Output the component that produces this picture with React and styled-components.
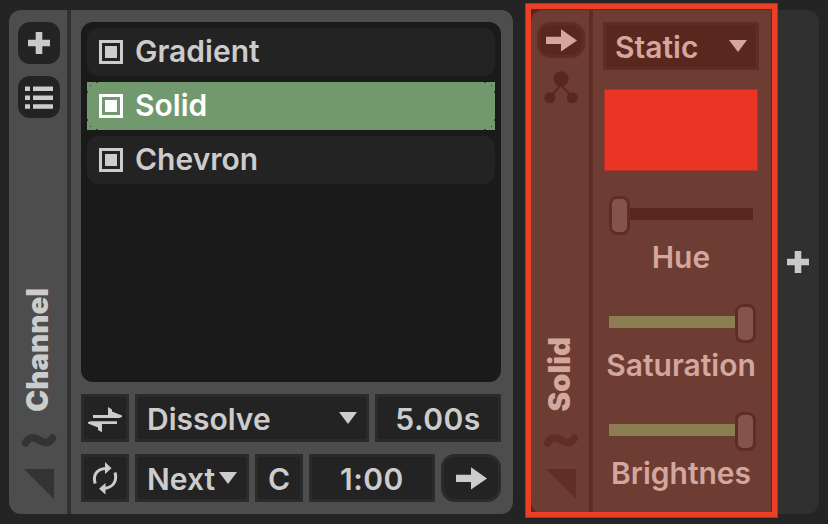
import React from "react";
import styled, { createGlobalStyle } from "styled-components";

const GlobalStyle = createGlobalStyle`
  * {
    box-sizing: border-box;
  }

  body {
    margin: 0;
    background: #242424;
    font-family: Inter, "Liberation Sans", sans-serif;
    font-size: 30px;
    font-weight: 600;
    color: #cccccc;
  }

  svg {
    display: block;
    flex: none;
  }
`;

const layers = ["Gradient", "Solid", "Chevron"];

const params = [
  { name: "Hue", value: 0 },
  { name: "Saturation", value: 1 },
  { name: "Brightnes", value: 1 },
];

const PlusIcon = () => (
  <svg width="22" height="22" viewBox="0 0 22 22" fill="#cbc8c8">
    <path d="M7.7 0h6.6v7.7H22v6.6h-7.7V22H7.7v-7.7H0V7.7h7.7z" />
  </svg>
);

const ListIcon = () => (
  <svg width="28" height="24" viewBox="0 0 28 24" fill="#cccccc">
    <path d="M0 1.5h5v4.5H0zM8 1.5h20v4.5H8zM0 10.5h5v4.5H0zM8 10.5h20v4.5H8zM0 19.3h5v4.5H0zM8 19.3h20v4.5H8z" />
  </svg>
);

const ArrowIcon = ({ color = "#cccccc" }) => (
  <svg width="32" height="24" viewBox="0 0 32 24" fill={color}>
    <path d="M1 8.8H16V1.2L32 12.5 16 23.5V16H1z" />
  </svg>
);

const SwapIcon = () => (
  <svg width="36" height="32" viewBox="0 0 36 32" fill="#cccccc">
    <path d="M6 13H21V5L25 7.5V9.5L35 13.5V15L32 16H6zM30 19.2V22H15V30.3L11 28V25.5L1 21.5V20L4 19.2z" />
  </svg>
);

const CycleIcon = () => (
  <svg width="26" height="34" viewBox="0 0 26 34">
    <g fill="none" stroke="#cccccc" strokeWidth="3">
      <path d="M3.2 22.5C0.5 13.5 5 8 14 7.5" />
      <path d="M23 11.5C25.5 20.5 21 26.5 12 27.5" />
    </g>
    <path fill="#cccccc" d="M13 1 19.5 7.3 13 13zM13.5 22 7 27.7 13.5 33.5z" />
  </svg>
);

const NodesIcon = () => (
  <svg width="36" height="34" viewBox="0 0 36 34" fill="#5a271e">
    <path d="M19 15 8 27M19 15 30 27" stroke="#5a271e" strokeWidth="2" />
    <circle cx="19" cy="8.8" r="7.6" />
    <circle cx="7.7" cy="27.8" r="5.5" />
    <circle cx="30.3" cy="27.8" r="5.5" />
  </svg>
);

const WaveIcon = ({ color }) => (
  <svg width="36" height="16" viewBox="0 0 36 16">
    <path
      d="M4.5 11C8 5 12 4.5 18 8S27.5 12 31.5 6"
      fill="none"
      stroke={color}
      strokeWidth="7.5"
      strokeLinecap="round"
    />
  </svg>
);

const CornerIcon = ({ color }) => (
  <svg width="30" height="30" viewBox="0 0 30 30" fill={color}>
    <path d="M0 0H30V30z" />
  </svg>
);

const CaretIcon = ({ color = "#cccccc" }) => (
  <svg width="18" height="12" viewBox="0 0 18 12" fill={color}>
    <path d="M0 0H18L9 12z" />
  </svg>
);

const App = () => {
  return (
    <Page>
      <GlobalStyle />
      <Channel>
        <Sidebar>
          <SideButton>
            <PlusIcon />
          </SideButton>
          <SideButton>
            <ListIcon />
          </SideButton>
          <SideFooter>
            <SideTitle>Channel</SideTitle>
            <WaveIcon color="#333333" />
            <CornerIcon color="#333333" />
          </SideFooter>
        </Sidebar>
        <Main>
          <List>
            {layers.map((name) => (
              <ListItem key={name} $active={name === "Solid"}>
                <Check />
                <ItemName>{name}</ItemName>
              </ListItem>
            ))}
          </List>
          <Controls>
            <Field $width={48} $center>
              <SwapIcon />
            </Field>
            <Field $width={234}>
              <FieldText>Dissolve</FieldText>
              <CaretIcon />
            </Field>
            <Field $width={126} $center>
              <FieldText $number>5.00s</FieldText>
            </Field>
          </Controls>
          <Controls>
            <Field $width={48} $center>
              <CycleIcon />
            </Field>
            <Field $width={114}>
              <FieldText>Next</FieldText>
              <CaretIcon />
            </Field>
            <Field $width={48} $center>
              <FieldText>C</FieldText>
            </Field>
            <Field $width={126} $center>
              <FieldText $number>1:00</FieldText>
            </Field>
            <Field $width={60} $center $round>
              <ArrowIcon />
            </Field>
          </Controls>
        </Main>
      </Channel>
      <LayerSlot>
        <Layer>
          <Sidebar $red>
            <TriggerButton>
              <ArrowIcon color="#d3a69e" />
            </TriggerButton>
            <NodesIcon />
            <SideFooter>
              <SideTitle>Solid</SideTitle>
              <WaveIcon color="#602e25" />
              <CornerIcon color="#602e25" />
            </SideFooter>
          </Sidebar>
          <LayerMain>
            <Field $width={156} $red>
              <FieldText>Static</FieldText>
              <CaretIcon color="#d3a69e" />
            </Field>
            <Swatch />
            {params.map(({ name, value }) => (
              <Param key={name}>
                <Slider $full={value === 1}>
                  <Thumb />
                </Slider>
                <ParamName>{name}</ParamName>
              </Param>
            ))}
          </LayerMain>
        </Layer>
        <Highlight />
      </LayerSlot>
      <AddLayer>
        <PlusIcon />
      </AddLayer>
    </Page>
  );
};

const Page = styled.div`
  display: flex;
  width: 828px;
  height: 524px;
  padding: 10px 9px;
  overflow: hidden;
`;

const Channel = styled.section`
  display: flex;
  width: 504px;
  height: 504px;
  margin-right: 18px;
  border-radius: 12px;
  background: #4d4d4d;
`;

const Sidebar = styled.div`
  display: flex;
  flex-direction: column;
  align-items: center;
  width: 62px;
  padding: 12px 0 15px;
  border-right: 4px solid ${({ $red }) => ($red ? "#602c23" : "#303030")};
`;

const SideButton = styled.div`
  display: flex;
  align-items: center;
  justify-content: center;
  width: 42px;
  height: 42px;
  margin: 0 0 12px 2px;
  border-radius: 12px;
  background: #232323;
`;

const TriggerButton = styled.div`
  display: flex;
  align-items: center;
  justify-content: center;
  width: 48px;
  height: 36px;
  margin: 0 0 12px 2px;
  border: 3px solid #602c23;
  border-radius: 14px;
  background: #5a271e;
`;

const SideFooter = styled.div`
  display: flex;
  flex-direction: column;
  align-items: center;
  margin: auto 0 0 2px;

  svg:last-child {
    margin-top: 21px;
  }
`;

const SideTitle = styled.div`
  margin: 0 4px 20px 0;
  line-height: 36px;
  font-size: 29.5px;
  font-weight: 900;
  writing-mode: vertical-rl;
  transform: rotate(180deg);
`;

const Main = styled.div`
  display: flex;
  flex-direction: column;
  gap: 12px;
  padding: 12px 10px;
`;

const List = styled.div`
  display: flex;
  flex-direction: column;
  gap: 6px;
  width: 420px;
  height: 360px;
  padding: 6px;
  border-radius: 12px;
  background: #1a1a1a;
`;

// one pixel speck of the worn corners of the active row
const speck = (x, y, size = "1px 1px") =>
  `linear-gradient(#35482f, #35482f) ${x} ${y} / ${size} no-repeat`;

const specks = ["left", "right"]
  .flatMap((side) =>
    ["top", "bottom"].flatMap((edge) => [
      speck(`${side} 3px`, `${edge} 3px`),
      speck(`${side} 9px`, `${edge} 0`, "2px 1px"),
      speck(`${side} 0`, `${edge} 9px`, "1px 2px"),
    ])
  )
  .join(", ");

const ListItem = styled.div`
  display: flex;
  align-items: center;
  gap: 12px;
  height: 48px;
  padding: 0 12px;
  border-radius: ${({ $active }) => ($active ? "0" : "12px")};
  background: ${({ $active }) => ($active ? `${specks}, #71996d` : "#232323")};
  color: ${({ $active }) => ($active ? "#ffffff" : "#cccccc")};
`;

const ItemName = styled.span`
  padding-bottom: 2px;
`;

const Check = styled.span`
  width: 24px;
  height: 24px;
  padding: 3px;
  border: 3px solid currentColor;
  background: currentColor;
  background-clip: content-box;
`;

const Controls = styled.div`
  display: flex;
  gap: 6px;
  height: 48px;
`;

const Field = styled.div`
  display: flex;
  flex: none;
  align-items: center;
  justify-content: ${({ $center }) => ($center ? "center" : "space-between")};
  width: ${({ $width }) => $width}px;
  height: 48px;
  padding: ${({ $center }) => ($center ? "0" : "0 9px")};
  border: 3px solid ${({ $red }) => ($red ? "#602c23" : "#2b2b2b")};
  border-radius: ${({ $round }) => ($round ? "14px" : "0")};
  background: ${({ $red }) => ($red ? "#5a271e" : "#232323")};
`;

const FieldText = styled.span`
  padding-top: 2px;
  letter-spacing: ${({ $number }) => ($number ? "0.5px" : "0")};
`;

const LayerSlot = styled.div`
  position: relative;
  width: 240px;
  height: 504px;
  background: #5a271e;
`;

const Layer = styled.section`
  display: flex;
  height: 504px;
  border-radius: 12px 0 0 12px;
  background: #6d3d33;
  color: #d3a69e;
`;

const LayerMain = styled.div`
  display: flex;
  flex-direction: column;
  padding: 12px 10px;
`;

const Swatch = styled.div`
  width: 154px;
  height: 82px;
  margin: 19px 1px 0;
  border: 1px solid #b43127;
  background: #ea3424;
`;

const Param = styled.div`
  display: flex;
  flex-direction: column;
  align-items: center;
  width: 156px;
  margin-top: 25px;
`;

const Slider = styled.div`
  display: flex;
  justify-content: ${({ $full }) => ($full ? "flex-end" : "flex-start")};
  width: 147px;
  height: 39px;
  margin-left: 2px;
  background: linear-gradient(
      ${({ $full }) => ($full ? "#8b7e53, #8b7e53" : "#5a271e, #5a271e")}
    )
    0 12px / 144px 12px no-repeat;
`;

const Thumb = styled.div`
  width: 21px;
  height: 39px;
  border: 3px solid #602c23;
  border-radius: 8px;
  background: #84544a;
`;

const ParamName = styled.div`
  height: 44px;
  line-height: 44px;
  white-space: nowrap;
`;

// selection frame drawn over the layer and its surroundings
const Highlight = styled.div`
  position: absolute;
  top: -7px;
  left: -6px;
  width: 253px;
  height: 515px;
  border: 6px solid #ec3f26;
  outline: 1px solid #a83424;
  outline-offset: -1px;
  box-shadow: inset -1px 1px 0 #65291f;
`;

const AddLayer = styled.div`
  display: flex;
  align-items: center;
  justify-content: center;
  width: 48px;
  height: 504px;
  padding-left: 5px;
  border-radius: 0 12px 12px 0;
  background: #303030;
`;

export default App;
